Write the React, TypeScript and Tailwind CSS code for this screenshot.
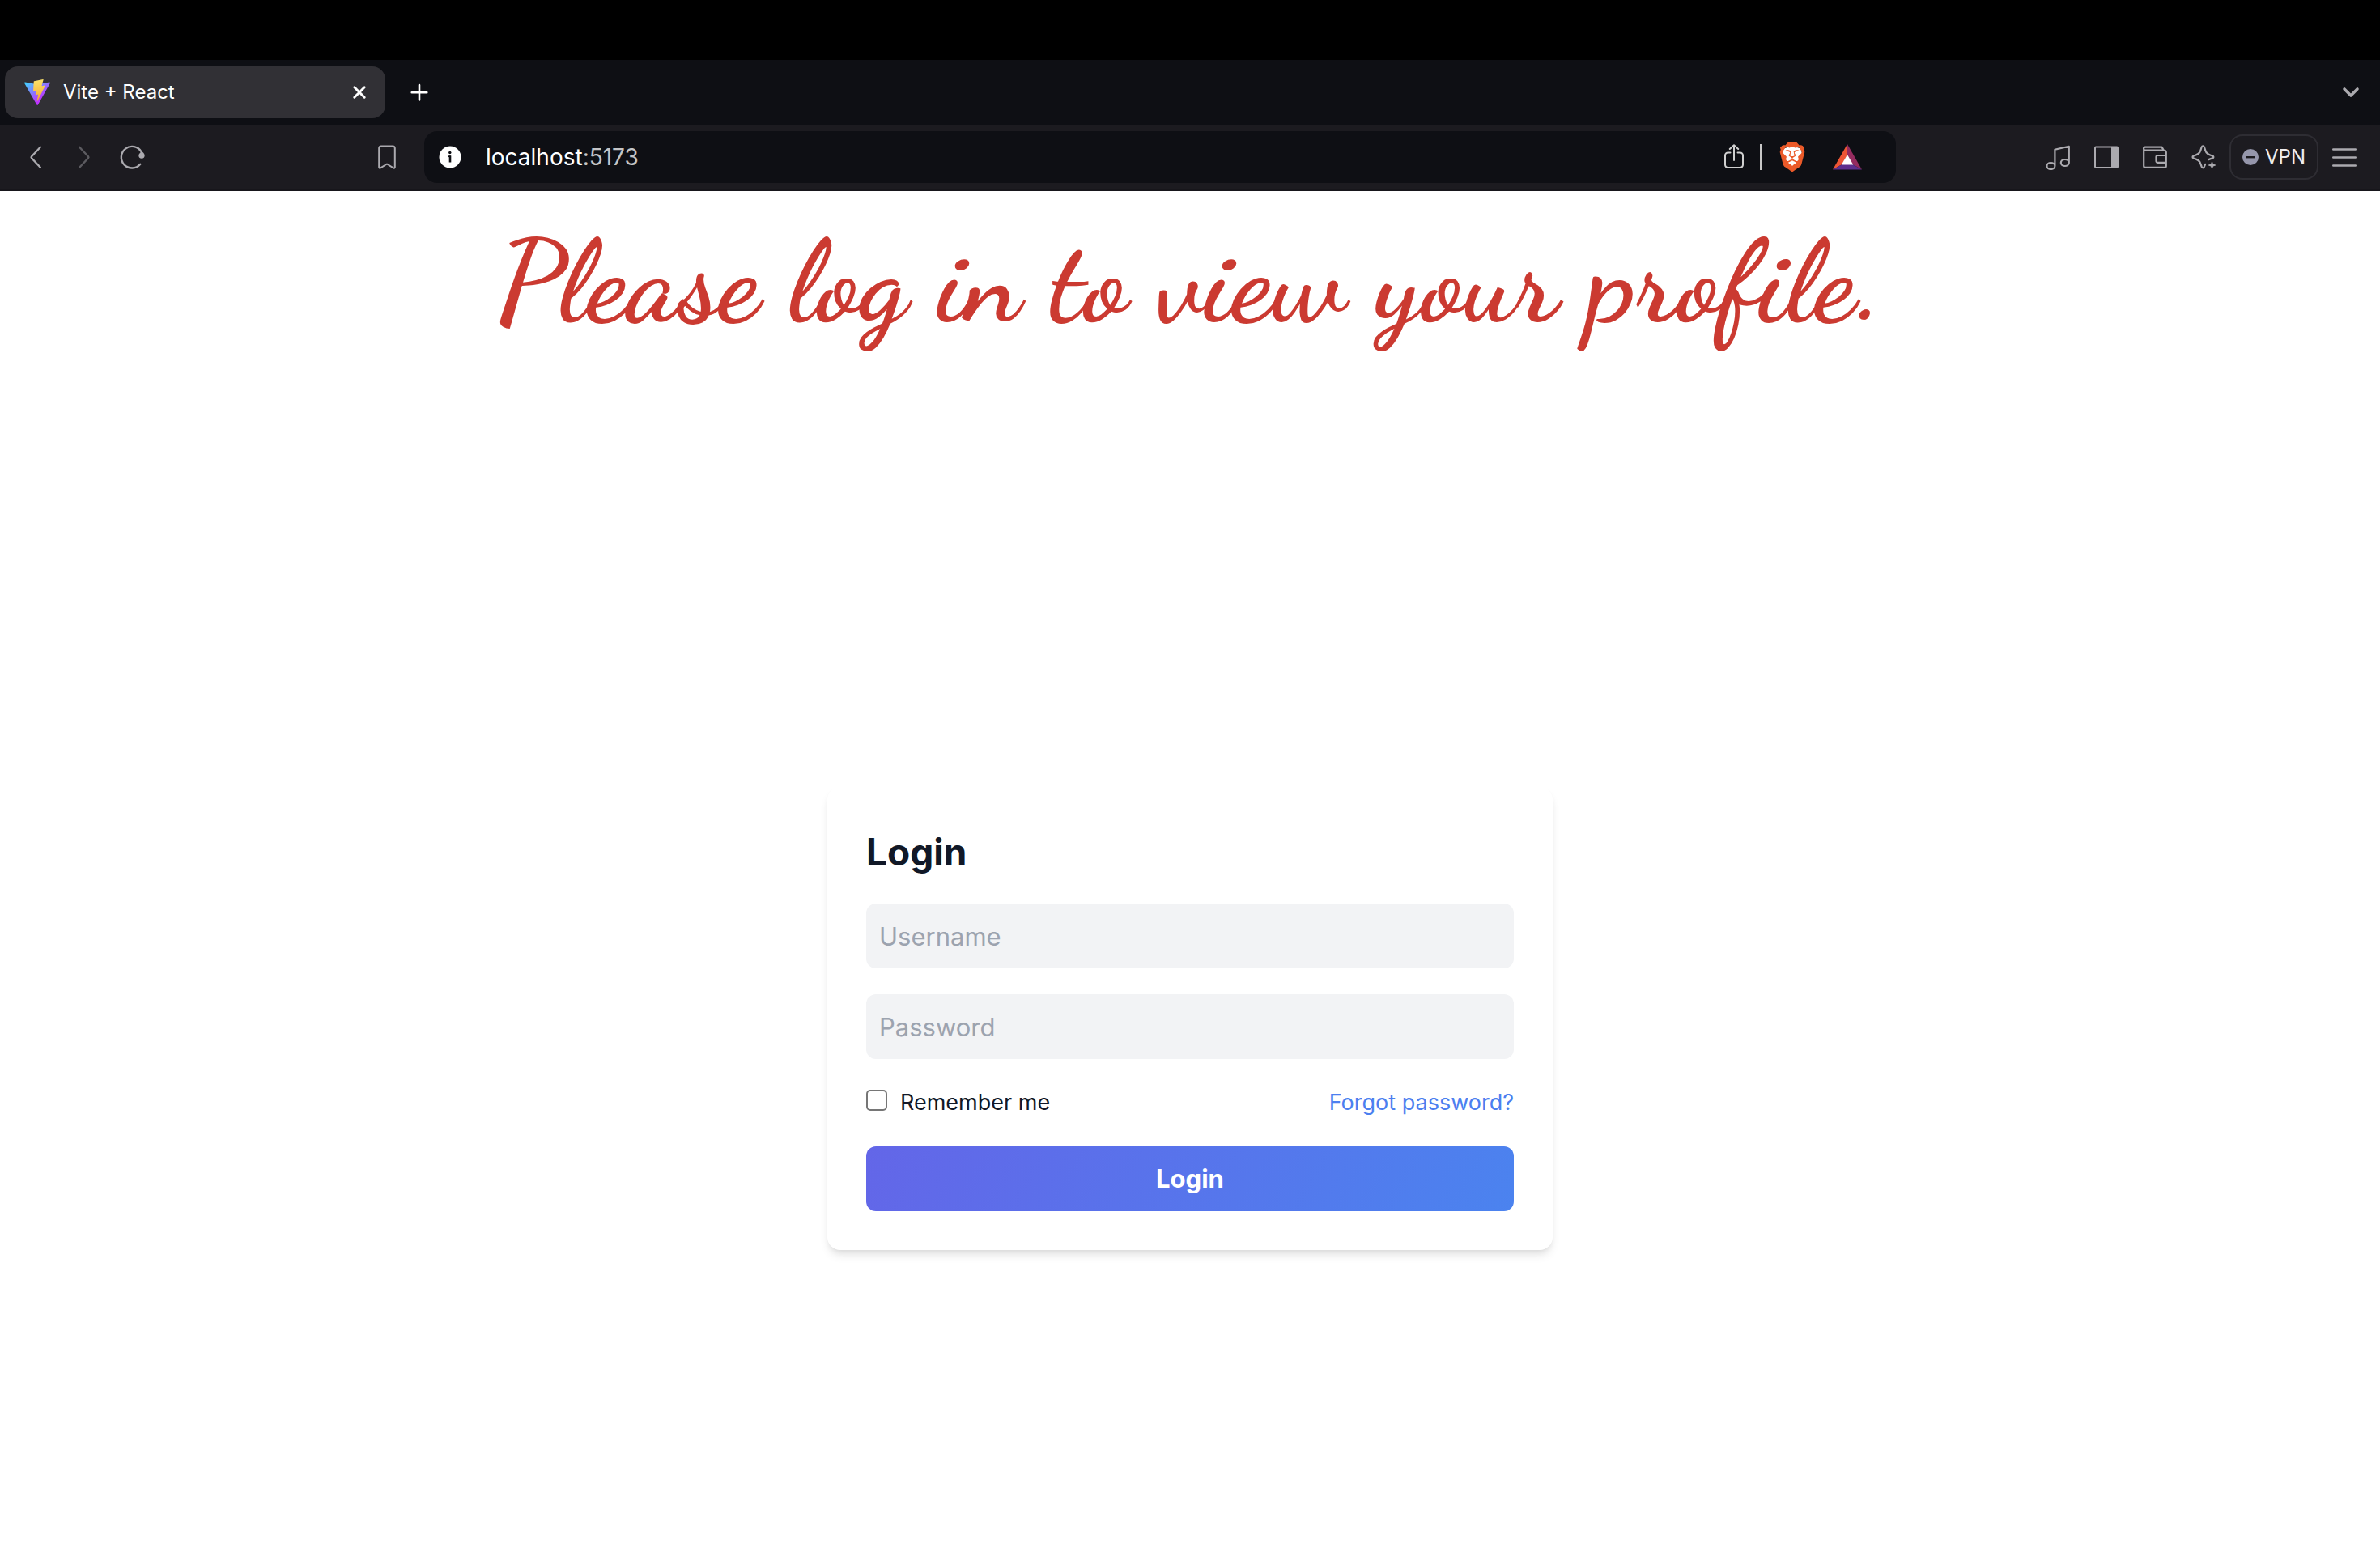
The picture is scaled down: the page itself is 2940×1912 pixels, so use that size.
import type { ReactNode } from 'react';
import { SiBrave } from 'react-icons/si';

type IconProps = { className?: string; children: ReactNode };

function Icon({ className = '', children }: IconProps) {
  return (
    <svg
      viewBox="0 0 32 32"
      className={`size-8 shrink-0 ${className}`}
      fill="none"
      stroke="currentColor"
      strokeWidth="2.4"
      strokeLinecap="round"
      strokeLinejoin="round"
      aria-hidden="true"
    >
      {children}
    </svg>
  );
}

function ViteLogo() {
  return (
    <svg viewBox="0 0 256 257" className="size-8 shrink-0" aria-hidden="true">
      <defs>
        <linearGradient id="viteBody" x1="-.828%" x2="57.636%" y1="7.652%" y2="78.411%">
          <stop offset="0%" stopColor="#41D1FF" />
          <stop offset="100%" stopColor="#BD34FE" />
        </linearGradient>
        <linearGradient id="viteBolt" x1="43.376%" x2="50.316%" y1="2.242%" y2="89.03%">
          <stop offset="0%" stopColor="#FBE26A" />
          <stop offset="100%" stopColor="#F5AE35" />
        </linearGradient>
      </defs>
      <path
        fill="url(#viteBody)"
        d="M255.153 37.938L134.897 252.976c-2.483 4.44-8.862 4.466-11.382.048L.875 37.958c-2.746-4.814 1.371-10.646 6.827-9.67l120.385 21.517a6.537 6.537 0 0 0 2.322-.004l117.867-21.483c5.438-.991 9.574 4.796 6.877 9.62Z"
      />
      <path
        fill="url(#viteBolt)"
        d="M185.432.063L96.44 17.501a3.268 3.268 0 0 0-2.634 3.014l-5.474 92.456a3.268 3.268 0 0 0 3.997 3.378l24.777-5.718c2.318-.535 4.413 1.507 3.936 3.838l-7.361 36.047c-.495 2.426 1.782 4.5 4.151 3.78l15.304-4.649c2.372-.72 4.652 1.36 4.15 3.788l-11.698 56.621c-.732 3.542 3.979 5.473 5.943 2.437l1.313-2.028l72.516-144.72c1.215-2.423-.88-5.186-3.54-4.672l-25.505 4.922c-2.396.462-4.435-1.77-3.759-4.114l16.646-57.705c.677-2.35-1.37-4.583-3.769-4.113Z"
      />
    </svg>
  );
}

function TabStrip() {
  return (
    <div className="flex h-20 items-center bg-[#0e0f14] pr-5 pl-[6px] text-white">
      <div className="flex h-16 w-[470px] items-center rounded-[16px] bg-[#313035] pr-4 pl-6">
        <ViteLogo />
        <span className="ml-4 flex-1 text-[24px] leading-8">Vite + React</span>
        <button type="button" aria-label="Close tab">
          <Icon>
            <path strokeWidth="3" d="M9.800 9.800l12.400 12.400M22.200 9.800l-12.400 12.400" />
          </Icon>
        </button>
      </div>
      <button type="button" aria-label="New tab" className="ml-[26px]">
        <Icon>
          <path strokeWidth="2.600" d="M16 7v18.500M6.700 16.200h18.600" />
        </Icon>
      </button>
      <button type="button" aria-label="Search tabs" className="ml-auto text-[#abaaaf]">
        <Icon>
          <path strokeWidth="3.600" d="M8 12l8 8 8-8" />
        </Icon>
      </button>
    </div>
  );
}

function Toolbar() {
  return (
    <div className="flex h-[82px] items-center border-b-2 border-[#17161b] bg-[#1c1b20] text-[#abaaaf]">
      <div className="flex w-[524px] items-center gap-7 pl-7">
        <button type="button" aria-label="Back">
          <Icon>
            <path d="M21.800 3.700L11 15.200q-.900 1 0 2L21.800 28.700" />
          </Icon>
        </button>
        <button type="button" aria-label="Forward" className="text-[#5c5b60]">
          <Icon>
            <path d="M10.200 3.700L21 15.200q.900 1 0 2L10.200 28.700" />
          </Icon>
        </button>
        <button type="button" aria-label="Reload">
          <Icon>
            <path d="M25.300 24.800A13.300 13.300 0 1 1 26.600 9.500" />
            <path
              d="M26.800 8.500c1.900 1.600 3.900 3.200 3.900 5.600a3.700 3.700 0 0 1-7.400 0c0-2.400 2.600-3.600 3.500-5.600z"
              fill="currentColor"
              stroke="none"
            />
          </Icon>
        </button>
        <button type="button" aria-label="Bookmark this page" className="mr-[30px] ml-auto">
          <Icon>
            <path
              strokeWidth="2"
              d="M8.800 2.500h14.400a2.600 2.600 0 0 1 2.600 2.600v23.300c0 1.200-1 1.600-1.900 1L16 24.500l-7.900 4.900c-.9.600-1.900.200-1.900-1V5.100A2.600 2.600 0 0 1 8.800 2.500z"
            />
          </Icon>
        </button>
      </div>

      <div className="flex h-16 flex-1 items-center rounded-[16px] bg-[#0e0f14] pr-[42px] pl-4">
        <button type="button" aria-label="Site information">
          <Icon>
            <circle cx="16" cy="16" r="13.500" fill="#fff" stroke="none" />
            <rect x="14.700" y="14.300" width="2.600" height="8.200" fill="#0e0f14" stroke="none" />
            <rect x="13.800" y="14.300" width="3" height="1.800" fill="#0e0f14" stroke="none" />
            <circle cx="15.800" cy="10.500" r="1.700" fill="#0e0f14" stroke="none" />
          </Icon>
        </button>
        <p className="ml-7 flex-1 text-[28px] leading-9 text-white">
          localhost<span className="text-[#c4c4c6]">:5173</span>
        </p>
        <button type="button" aria-label="Share" className="text-[#d0d0d0]">
          <Icon>
            <path
              strokeWidth="2"
              d="M11.500 10.500H8.500A3.500 3.500 0 0 0 5 14v11.500a3.500 3.500 0 0 0 3.500 3.500h15A3.500 3.500 0 0 0 27 25.500V14a3.500 3.500 0 0 0-3.500-3.500h-3M16 20V1.500M10.800 6L16 1.200l5.200 4.800"
            />
          </Icon>
        </button>
        <span className="ml-4 h-8 w-[2px] bg-[#c8c8c8]" />
        <button type="button" aria-label="Brave Shields" className="ml-5">
          <svg viewBox="0 0 24 24" className="size-9" aria-hidden="true">
            <path fill="#fff" d="M5 5l3-1h8l3 1 1 4-3 8-5 4-5-4-3-8z" />
            <SiBrave size={24} color="#eb5a29" />
          </svg>
        </button>
        <button type="button" aria-label="Brave Rewards" className="ml-8">
          <svg viewBox="0 0 36 32" className="h-8 w-9" aria-hidden="true">
            <path fill="#ed5635" d="M18 0v13.500L11.500 25 0 31.500z" />
            <path fill="#952c5f" d="M18 0v13.500L24.500 25 36 31.500z" />
            <path fill="#5e2f8e" d="M0 31.500L11.500 25h13L36 31.500z" />
            <path fill="#fff" d="M18 13l7.300 12.500H10.700z" />
          </svg>
        </button>
      </div>

      <div className="flex w-[598px] items-center justify-end pr-7">
        <div className="flex gap-7">
          <button type="button" aria-label="Playlist">
            <Icon>
              <path
                strokeWidth="2.200"
                d="M12.400 27V6.800L29.800 2.800V23M12.400 27a5 4 0 1 1-10 0a5 4 0 1 1 10 0M29.800 23a5 4 0 1 1-10 0a5 4 0 1 1 10 0"
              />
            </Icon>
          </button>
          <button type="button" aria-label="Sidebar">
            <Icon>
              <rect x="2" y="3.500" width="28" height="25.500" rx="1" strokeWidth="2" />
              <path d="M22 3.500h8V29h-8z" fill="currentColor" stroke="none" />
            </Icon>
          </button>
          <button type="button" aria-label="Wallet">
            <Icon>
              <path
                strokeWidth="2.200"
                d="M2.200 5.500V27a1.800 1.800 0 0 0 1.800 1.800h24a1.800 1.800 0 0 0 1.800-1.800V10a2.500 2.500 0 0 0-2.500-2.500H4a1.900 1.900 0 0 1 0-3.900h20.500l2.200 3.900M29.800 14H19.500a2 2 0 0 0-2 2v4.800a2 2 0 0 0 2 2h10.300"
              />
            </Icon>
          </button>
          <button type="button" aria-label="Leo AI">
            <Icon>
              <path
                strokeWidth="2.200"
                d="M22 19.200c1.800-.900 3.800-1.300 5.200-1.800 1.600-.600 1.600-2.200 0-2.800-4-1.300-7.600-2.300-8.800-6.500L16.900 3.500c-.600-1.700-2.600-1.700-3.200 0L12.200 8.100c-1.200 4.200-4.500 5.200-8.500 6.500-1.600.600-1.600 2.200 0 2.800 4 1.300 7.300 2.300 8.500 6.500l1.600 4.300c.6 1.500 2.400 1.500 3 0l1.300-3.400"
              />
              <path
                d="M26.500 20.500l1.500 4 4 1.500-4 1.500-1.500 4-1.500-4-4-1.500 4-1.500z"
                fill="currentColor"
                stroke="none"
              />
            </Icon>
          </button>
        </div>
        <button
          type="button"
          className="ml-4 flex h-14 items-center gap-2 rounded-[16px] border-2 border-[#2e2d33] px-[14px] text-[24px] leading-8 text-[#ededf0]"
        >
          <svg viewBox="0 0 20 20" className="size-5" aria-hidden="true">
            <circle cx="10" cy="10" r="10" fill="#9596ab" />
            <rect x="4.500" y="9" width="11" height="2.400" fill="#1c1b20" />
          </svg>
          VPN
        </button>
        <button type="button" aria-label="Menu" className="ml-4">
          <Icon>
            <path strokeWidth="2.400" d="M2.200 6.500h27.600M2.200 16.500h27.600M2.200 26.500h27.600" />
          </Icon>
        </button>
      </div>
    </div>
  );
}

function LoginCard() {
  const field =
    'h-20 w-full rounded-[12px] bg-[#f2f3f5] px-4 text-[31px] text-gray-900 outline-none placeholder:text-[#9ca3af]';
  return (
    <form
      className="w-full max-w-4xl rounded-[16px] bg-white p-12 shadow-[0_8px_12px_-2px_rgba(0,0,0,0.1),0_4px_8px_-4px_rgba(0,0,0,0.1)]"
      onSubmit={(event) => event.preventDefault()}
    >
      <h2 className="mb-8 text-[46px] leading-[64px] font-bold text-[#111827]">Login</h2>
      <div className="flex flex-col gap-8">
        <input className={field} type="text" placeholder="Username" aria-label="Username" />
        <input className={field} type="password" placeholder="Password" aria-label="Password" />
      </div>
      <div className="mt-8 flex h-11 items-center justify-between text-[27px] leading-10">
        <label className="flex items-center gap-4 text-[#111827]">
          <input
            type="checkbox"
            className="mb-[6px] size-[26px] appearance-none rounded-[5px] border-2 border-[#767676] bg-white"
          />
          Remember me
        </label>
        <a href="#forgot" className="text-[#4c7ff0]">
          Forgot password?
        </a>
      </div>
      <button
        type="submit"
        className="mt-8 h-20 w-full rounded-[12px] bg-linear-[120deg] from-[#6366e8] to-[#4b83ef] text-[31px] font-bold text-white"
      >
        Login
      </button>
    </form>
  );
}

export default function App() {
  return (
    <div className="flex min-h-screen flex-col bg-white font-['Inter',sans-serif]">
      <header className="border-t-[74px] border-black">
        <TabStrip />
        <Toolbar />
      </header>
      <main className="flex flex-1 flex-col items-center">
        <h1 className="mt-4 text-center font-['Dancing_Script',cursive] text-[143px] leading-[192px] font-bold text-[#cb3a31]">
          Please log in to view your profile.
        </h1>
        <section className="mt-[528px] flex w-full justify-center">
          <LoginCard />
        </section>
      </main>
    </div>
  );
}
